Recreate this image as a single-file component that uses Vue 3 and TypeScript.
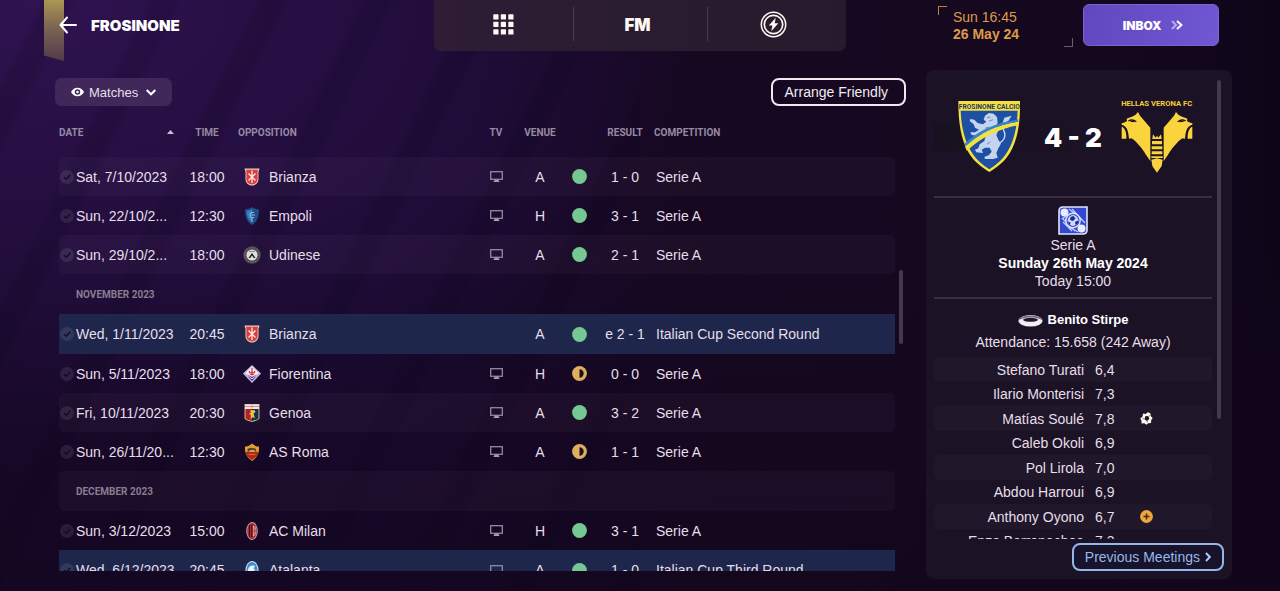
<script setup lang="ts">
import { ref } from 'vue'

type Crest = 'brianza' | 'empoli' | 'udinese' | 'fiorentina' | 'genoa' | 'roma' | 'milan' | 'atalanta'

interface Fixture {
  date: string
  time: string
  team: string
  crest: Crest
  tv: boolean
  venue: 'H' | 'A'
  outcome: 'win' | 'draw'
  result: string
  competition: string
  cup?: boolean
}

interface Row {
  month?: string
  fixture?: Fixture
  shaded?: boolean
}

interface Player {
  name: string
  rating: string
  event?: 'goal' | 'injury'
}

const view = ref('Matches')

const rows: Row[] = [
  { shaded: true, fixture: { date: 'Sat, 7/10/2023', time: '18:00', team: 'Brianza', crest: 'brianza', tv: true, venue: 'A', outcome: 'win', result: '1 - 0', competition: 'Serie A' } },
  { fixture: { date: 'Sun, 22/10/2...', time: '12:30', team: 'Empoli', crest: 'empoli', tv: true, venue: 'H', outcome: 'win', result: '3 - 1', competition: 'Serie A' } },
  { shaded: true, fixture: { date: 'Sun, 29/10/2...', time: '18:00', team: 'Udinese', crest: 'udinese', tv: true, venue: 'A', outcome: 'win', result: '2 - 1', competition: 'Serie A' } },
  { month: 'NOVEMBER 2023' },
  { fixture: { date: 'Wed, 1/11/2023', time: '20:45', team: 'Brianza', crest: 'brianza', tv: false, venue: 'A', outcome: 'win', result: 'e 2 - 1', competition: 'Italian Cup Second Round', cup: true } },
  { fixture: { date: 'Sun, 5/11/2023', time: '18:00', team: 'Fiorentina', crest: 'fiorentina', tv: true, venue: 'H', outcome: 'draw', result: '0 - 0', competition: 'Serie A' } },
  { shaded: true, fixture: { date: 'Fri, 10/11/2023', time: '20:30', team: 'Genoa', crest: 'genoa', tv: true, venue: 'A', outcome: 'win', result: '3 - 2', competition: 'Serie A' } },
  { fixture: { date: 'Sun, 26/11/20...', time: '12:30', team: 'AS Roma', crest: 'roma', tv: true, venue: 'A', outcome: 'draw', result: '1 - 1', competition: 'Serie A' } },
  { shaded: true, month: 'DECEMBER 2023' },
  { fixture: { date: 'Sun, 3/12/2023', time: '15:00', team: 'AC Milan', crest: 'milan', tv: true, venue: 'H', outcome: 'win', result: '3 - 1', competition: 'Serie A' } },
  { fixture: { date: 'Wed, 6/12/2023', time: '20:45', team: 'Atalanta', crest: 'atalanta', tv: true, venue: 'A', outcome: 'win', result: '1 - 0', competition: 'Italian Cup Third Round', cup: true } },
]

const players: Player[] = [
  { name: 'Stefano Turati', rating: '6,4' },
  { name: 'Ilario Monterisi', rating: '7,3' },
  { name: 'Matías Soulé', rating: '7,8', event: 'goal' },
  { name: 'Caleb Okoli', rating: '6,9' },
  { name: 'Pol Lirola', rating: '7,0' },
  { name: 'Abdou Harroui', rating: '6,9' },
  { name: 'Anthony Oyono', rating: '6,7', event: 'injury' },
  { name: 'Enzo Barrenechea', rating: '7,3' },
]
</script>

<template>
  <div class="screen">
    <header class="topbar">
      <div class="title">
        <span class="ribbon" aria-hidden="true"></span>
        <button class="icon-btn" type="button" aria-label="Back">
          <svg width="18" height="18" viewBox="0 0 18 18" fill="none" stroke="#fff" stroke-width="2" stroke-linecap="round" stroke-linejoin="round">
            <path d="M17 9H2M8 1.500L1.500 9L8 16.500" />
          </svg>
        </button>
        <h1>FROSINONE</h1>
      </div>

      <nav class="nav">
        <button type="button" aria-label="Menu">
          <svg width="21" height="21" viewBox="0 0 21 21" fill="#fff8f2">
            <template v-for="r in 3" :key="r">
              <rect v-for="c in 3" :key="c" :x="(c - 1) * 7.5 + 0.3" :y="(r - 1) * 7.5 + 0.3" width="5.200" height="5.200" rx="0.600" />
            </template>
          </svg>
        </button>
        <button type="button" class="fm">FM</button>
        <button type="button" aria-label="Quick actions">
          <svg width="27" height="27" viewBox="0 0 27 27" fill="none" stroke="#fff8f2">
            <circle cx="13.500" cy="13.500" r="12.200" stroke-width="1.500" />
            <circle cx="13.500" cy="13.500" r="9.200" stroke-width="1.700" />
            <path d="M15.800 6.800L8.800 14.600H12.400L11.300 20.200L18.300 12.300H14.700Z" fill="#fff8f2" stroke="none" />
          </svg>
        </button>
      </nav>

      <div class="right">
        <div class="clock">
          <time>Sun 16:45</time>
          <strong>26 May 24</strong>
        </div>
        <button type="button" class="inbox">
          INBOX
          <svg width="12" height="10" viewBox="0 0 12 10" fill="none" stroke-width="2">
            <path d="M1 1L5 5L1 9" stroke="#b9a9ee" />
            <path d="M6 1L10.400 5L6 9" stroke="#fff" />
          </svg>
        </button>
      </div>
    </header>

    <div class="content">
      <main class="main">
        <div class="toolbar">
          <label class="filter">
            <svg width="13" height="10" viewBox="0 0 13 10">
              <path d="M0 5C3 -0.700 10 -0.700 13 5C10 10.700 3 10.700 0 5Z" fill="#fff" />
              <circle cx="6.500" cy="5" r="2" fill="none" stroke="#40295c" stroke-width="1.500" />
            </svg>
            <select v-model="view" aria-label="View">
              <option>Matches</option>
            </select>
            <svg width="10" height="7" viewBox="0 0 10 7" fill="none" stroke="#fff" stroke-width="2">
              <path d="M0.700 1L5 5.300L9.300 1" />
            </svg>
          </label>
          <button type="button" class="outline">Arrange Friendly</button>
        </div>

        <div class="list">
          <table class="fixtures">
            <colgroup>
              <col class="c-date" /><col class="c-time" /><col /><col class="c-tv" /><col class="c-venue" /><col class="c-dot" /><col class="c-result" /><col />
            </colgroup>
            <thead>
              <tr>
                <th scope="col">
                  <span class="sort">DATE
                    <svg width="7" height="4" viewBox="0 0 7 4"><path d="M0 4L3.500 0L7 4Z" fill="#c9bfd2" /></svg>
                  </span>
                </th>
                <th scope="col" class="mid">TIME</th>
                <th scope="col" class="opp-head">OPPOSITION</th>
                <th scope="col" class="mid">TV</th>
                <th scope="col" class="mid">VENUE</th>
                <th scope="col" class="mid" aria-label="Outcome"></th>
                <th scope="col" class="mid result">RESULT</th>
                <th scope="col">COMPETITION</th>
              </tr>
            </thead>
            <tbody>
              <template v-for="(row, i) in rows" :key="i">
                <tr v-if="row.month" class="month" :class="{ shaded: row.shaded }">
                  <th scope="rowgroup" colspan="8">{{ row.month }}</th>
                </tr>
                <tr v-else-if="row.fixture" :class="{ shaded: row.shaded, cup: row.fixture.cup }">
                  <td>
                    <span class="date">
                      <svg width="14" height="14" viewBox="0 0 14 14">
                        <circle cx="7" cy="7" r="7" fill="#ffffff" fill-opacity="0.090" />
                        <path d="M4 7.200L6.300 9.300L10.300 4.800" fill="none" stroke="#170a26" stroke-width="1.500" />
                      </svg>
                      {{ row.fixture.date }}
                    </span>
                  </td>
                  <td class="mid">{{ row.fixture.time }}</td>
                  <td>
                    <span class="team">
                      <svg class="badge" width="18" height="18" viewBox="0 0 18 18">
                        <template v-if="row.fixture.crest === 'brianza'">
                          <path d="M1.500 0.500H16.500L15.500 4V11C15.500 15 12.500 17.500 9 17.500S2.500 15 2.500 11V4Z" fill="#f0c9c5" />
                          <path d="M3 1.700H15L14.600 4V11C14.600 14.300 12 16.400 9 16.400S3.400 14.300 3.400 11V4Z" fill="#d8403c" />
                          <path d="M9 2.500V15M5.500 5.500L12.500 12.500M12.500 5.500L5.500 12.500" stroke="#fbe9e6" stroke-width="1.300" fill="none" />
                        </template>
                        <template v-else-if="row.fixture.crest === 'empoli'">
                          <path d="M2 2.500C5 2 7 1.500 9 0C11 1.500 13 2 16 2.500C16 10 14 15 9 18C4 15 2 10 2 2.500Z" fill="#1f4f86" />
                          <path d="M3.500 4C6 3.500 7.500 3 9 2V15.500C5.500 13 3.700 9 3.500 4Z" fill="#3b7fc4" />
                          <path d="M11 5.500C7 4.500 6 10 9 10.500H11M8.500 8H12M9 11V15" stroke="#8db4dc" stroke-width="1.100" fill="none" />
                        </template>
                        <template v-else-if="row.fixture.crest === 'udinese'">
                          <circle cx="9" cy="9" r="8.800" fill="#4b4650" />
                          <circle cx="9" cy="9" r="7.300" fill="none" stroke="#857f86" stroke-width="1" stroke-dasharray="1.200 1.200" />
                          <circle cx="9" cy="9" r="5.600" fill="#dededb" />
                          <path d="M5.500 12L9 7L12.500 12L10.800 12L9 9.500L7.200 12Z" fill="#1c1a20" />
                          <path d="M6 5.500H12" stroke="#8b8b8b" />
                        </template>
                        <template v-else-if="row.fixture.crest === 'fiorentina'">
                          <path d="M9 0L18 8.500L9 18L0 8.500Z" fill="#cfc5e6" />
                          <path d="M2 8.500L9 12L16 8.500L9 16.300Z" fill="#5b2c9b" />
                          <path d="M9 2L15.500 8.300L9 11.500L2.500 8.300Z" fill="#f6f1f6" />
                          <path d="M9 3V10.500M6.500 6C5.500 8.500 8 8.500 9 6.500C10 8.500 12.500 8.500 11.500 6M7 9.500H11" stroke="#d32f3f" stroke-width="1.200" fill="none" />
                          <path d="M3 9L9 14L15 9" stroke="#e6dcf2" stroke-width="1" fill="none" />
                        </template>
                        <template v-else-if="row.fixture.crest === 'genoa'">
                          <path d="M1.500 0H16.500V14C16.500 16 12 17 9 18C6 17 1.500 16 1.500 14Z" fill="#c9b98a" />
                          <path d="M2 0.500H16V5H2Z" fill="#f0eae6" />
                          <path d="M2.500 5H9V17C6 16 2.500 15.500 2.500 14Z" fill="#b5202c" />
                          <path d="M9 5H15.500V14C15.500 15.500 12 16 9 17Z" fill="#16324a" />
                          <path d="M2 2.500H16M9 0.500V4.500" stroke="#d98a86" stroke-width="1" />
                          <path d="M7 6.500L11.500 6L12.500 8L10.500 9.500L12 14.500L10 13L7.500 15L8 11L6 10L8 8.500Z" fill="#e9c93f" />
                        </template>
                        <template v-else-if="row.fixture.crest === 'roma'">
                          <path d="M2 3.500C4.500 4 6.500 2.500 9 0.500C11.500 2.500 13.500 4 16 3.500C16.500 11 13.500 15 9 18C4.500 15 1.500 11 2 3.500Z" fill="#e0a02f" />
                          <path d="M2.300 9H15.700C14.500 12.800 12.300 15 9 17C5.700 15 3.500 12.800 2.300 9Z" fill="#b3261f" />
                          <path d="M4.500 8.500V6L7 4.800L12.500 5.500L13.500 8.500H12L11.500 7H7L6.500 8.500Z" fill="#4a423c" />
                          <path d="M5.500 11.500H12.500" stroke="#d9622f" stroke-width="1.200" />
                        </template>
                        <template v-else-if="row.fixture.crest === 'milan'">
                          <ellipse cx="9" cy="9" rx="5.800" ry="9" fill="#b9a9ac" />
                          <ellipse cx="9" cy="9" rx="4.800" ry="8" fill="#b02831" />
                          <path d="M6.500 3V15M8.800 2.500V15.500" stroke="#3a1418" stroke-width="1" />
                          <path d="M10 3.500L12.500 5V13L10 14.500Z" fill="#e8dede" />
                          <path d="M11.200 4.500V13.500M10 9H13" stroke="#b7373d" stroke-width="1.200" />
                        </template>
                        <template v-else>
                          <ellipse cx="9" cy="9" rx="6.500" ry="9" fill="#dfe9f2" />
                          <ellipse cx="9" cy="9" rx="5.500" ry="8" fill="#3f8fd0" />
                          <path d="M5 10C5 6 8 3.500 12 5L10.500 7.500L12.500 9L10 10V16H6Z" fill="#eef3f7" />
                        </template>
                      </svg>
                      {{ row.fixture.team }}
                    </span>
                  </td>
                  <td class="mid">
                    <svg v-if="row.fixture.tv" class="icon" width="13" height="11" viewBox="0 0 13 11" fill="none" stroke="#938a9f">
                      <rect x="0.700" y="0.700" width="11.600" height="7.600" stroke-width="1.300" />
                      <path d="M3.300 11L4.800 8.800H8.200L9.700 11Z" fill="#a79eb1" stroke="none" />
                    </svg>
                  </td>
                  <td class="mid">{{ row.fixture.venue }}</td>
                  <td class="mid">
                    <svg class="icon" width="15" height="15" viewBox="0 0 15 15" role="img" :aria-label="row.fixture.outcome">
                      <circle v-if="row.fixture.outcome === 'win'" cx="7.500" cy="7.500" r="7.400" fill="#76c893" />
                      <template v-else>
                        <circle cx="7.500" cy="7.500" r="7.400" fill="#deb05e" />
                        <path d="M7.500 3.300A4.200 4.200 0 0 1 7.500 11.700Z" fill="#1d0f1c" />
                      </template>
                    </svg>
                  </td>
                  <td class="mid result">{{ row.fixture.result }}</td>
                  <td class="comp">{{ row.fixture.competition }}</td>
                </tr>
              </template>
            </tbody>
          </table>
          <span class="thumb list-thumb" aria-hidden="true"></span>
        </div>
      </main>

      <aside class="panel">
        <div class="scroll">
          <section class="score">
            <svg width="64" height="73" viewBox="50 45 192 219" role="img" aria-label="Frosinone Calcio">
              <path d="M54 48H239C240 115 232 165 208 205C192 231 170 247 147 261C124 247 102 231 86 205C62 165 54 115 54 48Z" fill="#f6e13c" />
              <path d="M61 77H232C230 125 222 165 202 199C187 224 168 240 147 253C126 240 107 224 92 199C72 165 63 125 61 77Z" fill="#1d4fa3" />
              <text x="147" y="71" text-anchor="middle" class="crest-text blue">FROSINONE CALCIO</text>
              <path d="M134 92L146 84L160 86L170 96L172 112L168 124L174 136L168 150L174 164L182 176L174 190L168 204L172 218L158 222L134 222L132 216L146 210L154 200L148 188L134 188L124 194L128 204L108 202L104 194L114 190L118 178L132 168L136 154L124 146L112 152L94 150L90 142L104 142L116 134L104 128L100 118L88 108L90 102L102 104L112 114L128 118L138 110L130 104Z" fill="#c5d4ee" />
              <path d="M140 98L150 96M146 108L158 104M134 130L146 126M148 140L156 136M140 178L150 170" stroke="#6d8bc8" stroke-width="3" fill="none" />
              <path d="M172 176C194 168 198 150 190 136C184 124 186 118 192 112" stroke="#c5d4ee" stroke-width="4" fill="none" />
              <path d="M186 116L192 98L214 92L204 108Z" fill="#c5d4ee" />
              <path d="M76 184C115 150 165 122 233 112V119C165 132 118 160 80 194Z" fill="#f6e13c" stroke="#f6e13c" stroke-width="4" />
              <path d="M72 176C112 138 165 112 234 103V110C165 120 115 147 76 184Z" fill="#2f86cf" />
            </svg>
            <p class="goals">4 - 2</p>
            <svg width="74" height="74" viewBox="57 42 222 222" role="img" aria-label="Hellas Verona FC">
              <text x="167" y="62" text-anchor="middle" class="crest-text gold">HELLAS VERONA FC</text>
              <g fill="#f9d43c">
                <path d="M62 115C70 112 74 112 78 108L77 101C86 98 96 94 103 90L111 81L117 92L148 128V228L138 214C128 196 112 176 98 164L92 160L84 161C82 140 80 124 62 119Z" />
                <path d="M62 125C72 128 77 144 76 161H62Z" />
                <path d="M274 115C266 112 262 112 258 108L259 101C250 98 240 94 233 90L225 81L219 92L188 128V228L198 214C208 196 224 176 238 164L244 160L252 161C254 140 256 124 274 119Z" />
                <path d="M274 125C264 128 259 144 260 161H274Z" />
                <path d="M156 148L164 158L168 152L172 158L180 148L182 162H154Z" />
                <path d="M153 168H183V178H153ZM152 184H184V193H152ZM152 199H184V208H152ZM151 214H185V219H151Z" />
                <path d="M151 224L168 220L185 224L182 243L168 263L154 243Z" />
              </g>
              <g fill="none" stroke="#1b1226" stroke-width="4">
                <path d="M82 108C90 103 98 104 106 110M88 108L100 110" />
                <path d="M254 108C246 103 238 104 230 110M248 108L236 110" />
              </g>
            </svg>
          </section>

          <section class="match">
            <svg class="league" width="30" height="29" viewBox="0 0 30 29" role="img" aria-label="Serie A">
              <path d="M5 1H29V24Q29 28 25 28H1V5Q1 1 5 1Z" fill="#3347cf" stroke="#dfe4ff" stroke-width="1.600" />
              <circle cx="6.500" cy="6.500" r="4" fill="#e9ecff" />
              <circle cx="23.500" cy="22.500" r="4" fill="#e9ecff" />
              <path d="M11 3L24 14M8 10L4 13M4 12L17 25M11 21L20 26M14 3L27 17M5 16L14 25" stroke="#c5ceff" stroke-width="1.200" />
              <circle cx="15" cy="14.500" r="7.200" fill="#3347cf" stroke="#dfe4ff" stroke-width="1.400" />
              <circle cx="15" cy="14.500" r="5.400" fill="#cfd7ff" />
              <path d="M12.500 11L15.500 10L17.500 12.500L15 15L12 14ZM10 15.500L12.500 16.500L12 19L10.500 18ZM17 16L20 14.500V17.500L17.500 19Z" fill="#1b2b8e" />
            </svg>
            <p>Serie A</p>
            <p class="bold">Sunday 26th May 2024</p>
            <p>Today 15:00</p>
          </section>

          <section class="venue">
            <p class="stadium">
              <svg width="25" height="13" viewBox="0 0 25 13">
                <ellipse cx="12.500" cy="6.800" rx="12" ry="5.800" fill="#f1eff4" />
                <path d="M0.500 6C2 0 23 0 24.500 6L20 4.500C16 3 9 3 5 4.500Z" fill="#77717f" />
                <ellipse cx="12.500" cy="5.800" rx="7.500" ry="2" fill="#221a2c" />
              </svg>
              Benito Stirpe
            </p>
            <p>Attendance: 15.658 (242 Away)</p>
          </section>

          <table class="players">
            <colgroup>
              <col /><col class="p-rating" /><col class="p-event" /><col class="p-rest" />
            </colgroup>
            <tbody>
              <tr v-for="p in players" :key="p.name">
                <th scope="row">{{ p.name }}</th>
                <td class="rating">{{ p.rating }}</td>
                <td class="mid">
                  <svg v-if="p.event === 'goal'" class="icon" width="13" height="13" viewBox="0 0 13 13" role="img" aria-label="Goal">
                    <path d="M3 1.500L5.500 2L8 0.300L10.500 1.500L10.800 4.300L12.700 6L11.300 8L11 11L8.300 11.300L6.500 12.800L4.300 11.300L1.500 11.500L1.500 8.800L0.300 6.500L2.600 4.500Z" fill="#fffaf2" />
                    <path d="M5.500 4L8.500 4.200L9.300 7L7 8.900L4.500 7.200Z" fill="#1d1228" />
                    <path d="M2.500 6.500L4.500 7M7 8.900L7.300 10.500M9 4.200L10.500 3" stroke="#1d1228" stroke-width="0.600" />
                  </svg>
                  <svg v-else-if="p.event === 'injury'" class="icon" width="13" height="13" viewBox="0 0 13 13" role="img" aria-label="Injury">
                    <circle cx="6.500" cy="6.500" r="6.400" fill="#eda73c" />
                    <path d="M6.500 3.500V9.500M3.500 6.500H9.500" stroke="#3d2a1c" stroke-width="1.500" />
                  </svg>
                </td>
                <td></td>
              </tr>
            </tbody>
          </table>
        </div>
        <span class="thumb panel-thumb" aria-hidden="true"></span>
        <button type="button" class="outline previous">
          Previous Meetings
          <svg width="6" height="10" viewBox="0 0 6 10" fill="none" stroke="#a9cdf5" stroke-width="2">
            <path d="M1 1L4.800 5L1 9" />
          </svg>
        </button>
      </aside>
    </div>
  </div>
</template>

<style>
body {
  margin: 0;
  background: #14071f;
}
</style>

<style scoped>
* {
  box-sizing: border-box;
}

.screen {
  display: flex;
  flex-direction: column;
  height: 100vh;
  overflow: hidden;
  font-family: "Liberation Sans", Arial, sans-serif;
  font-size: 14px;
  color: #e6dfe9;
  background:
    repeating-linear-gradient(116deg, rgba(10, 2, 24, 0) 0 36px, rgba(10, 2, 24, 0.16) 44px 62px, rgba(10, 2, 24, 0) 70px 96px) 0 0 / 50% 100% no-repeat,
    radial-gradient(ellipse 660px 440px at 3% 0%, #2f1350 0%, rgba(43, 17, 74, 0.7) 40%, rgba(30, 11, 52, 0) 100%),
    linear-gradient(180deg, rgba(18, 6, 28, 0) 40%, rgba(18, 6, 28, 0.7) 100%),
    linear-gradient(90deg, #1a0a2e 0%, #1b0a32 30%, #160820 56%, #14081f 85%, #0f0519 100%);
}

h1,
p {
  margin: 0;
}

button,
select {
  font: inherit;
  color: inherit;
  border: 0;
  background: none;
  padding: 0;
  cursor: pointer;
}

svg {
  flex: none;
}

.topbar {
  display: grid;
  grid-template-columns: 1fr 412px 1fr;
  align-items: start;
  flex: none;
  height: 70px;
}

.title {
  position: relative;
  display: flex;
  align-items: center;
  gap: 14px;
  height: 50px;
  padding-left: 59px;
}

.ribbon {
  position: absolute;
  top: 0;
  left: 44px;
  width: 20px;
  height: 61px;
  background: linear-gradient(#ac9652, #7b6552 45%, #52394b);
  clip-path: polygon(0 0, 100% 0, 100% 100%, 0 91%);
}

.icon-btn {
  position: relative;
  display: flex;
}

h1 {
  font-family: Inter, sans-serif;
  font-size: 15px;
  font-weight: 900;
  color: #fff;
}

.nav {
  display: grid;
  grid-template-columns: 139px 1fr 131px;
  height: 51px;
  padding: 7px 8px 10px 0;
  border-radius: 0 0 7px 7px;
  background: linear-gradient(90deg, #2e1d35, #261b2c);
}

.nav button {
  display: flex;
  align-items: center;
  justify-content: center;
}

.nav button + button {
  border-left: 1px solid #4a3d50;
}

.nav .fm {
  padding: 2px 6px 0 0;
  font-family: Inter, sans-serif;
  font-size: 17px;
  font-weight: 900;
  color: #fff8f2;
}

.right {
  display: flex;
  justify-content: flex-end;
  gap: 10px;
  padding: 4px 61px 0 0;
}

.clock {
  display: flex;
  flex-direction: column;
  width: 135px;
  height: 41px;
  margin-top: 2px;
  padding: 3px 0 0 15px;
  line-height: 17px;
  color: #dd9a48;
  background:
    linear-gradient(#b98042, #b98042) 0 0 / 9px 1px no-repeat,
    linear-gradient(#b98042, #b98042) 0 0 / 1px 9px no-repeat,
    linear-gradient(#6a5d70, #6a5d70) 100% 100% / 9px 1px no-repeat,
    linear-gradient(#6a5d70, #6a5d70) 100% 100% / 1px 9px no-repeat;
}

.inbox {
  display: flex;
  align-items: center;
  justify-content: center;
  gap: 10px;
  width: 136px;
  height: 42px;
  padding-left: 4px;
  border: 1px solid #7a63d2;
  border-radius: 6px;
  background: linear-gradient(100deg, #6247c0, #6f58d2);
  font-family: Inter, sans-serif;
  font-size: 12px;
  font-weight: 900;
  color: #fff;
}

.content {
  display: flex;
  flex: 1;
  gap: 19px;
  min-height: 0;
  padding: 0 48px 12px 55px;
}

.main {
  display: flex;
  flex: 1;
  flex-direction: column;
  min-width: 0;
  padding: 8px 0;
}

.toolbar {
  display: flex;
  flex: none;
  align-items: center;
  justify-content: space-between;
  padding-right: 1px;
}

.filter {
  display: flex;
  align-items: center;
  gap: 5px;
  height: 28px;
  padding: 0 16px;
  border-radius: 7px;
  background: #40295a;
}

.filter select {
  appearance: none;
  margin-right: 2px;
  font-size: 13px;
  outline: 0;
}

.outline {
  display: flex;
  align-items: center;
  height: 28px;
  padding: 0 16px 0 12px;
  border: 2px solid #efe9f1;
  border-radius: 8px;
  color: #f1ebf2;
}

.list {
  position: relative;
  flex: 1;
  min-height: 0;
  overflow: hidden;
  padding: 0 12px 0 4px;
}

table {
  width: 100%;
  table-layout: fixed;
  border-collapse: separate;
  border-spacing: 0;
}

th,
td {
  padding: 0;
  text-align: left;
  white-space: nowrap;
}

.mid {
  text-align: center;
}

.c-date { width: 120px; }
.c-time { width: 56px; }
.c-tv { width: 40px; }
.c-venue { width: 48px; }
.c-dot { width: 30px; }
.c-result { width: 60px; }

.fixtures thead th {
  height: 51px;
  padding-top: 1px;
  font-family: Roboto, sans-serif;
  font-size: 10px;
  font-weight: 700;
  color: #978aa4;
}

.sort {
  display: flex;
  align-items: center;
  justify-content: space-between;
  padding-right: 5px;
}

.fixtures .opp-head {
  padding-left: 3px;
}

.fixtures .result {
  padding-left: 2px;
}

.fixtures tbody td {
  height: 39px;
}

.fixtures .month th {
  height: 40px;
  padding: 1px 0 0 17px;
  font-family: Roboto, sans-serif;
  font-size: 10px;
  font-weight: 700;
  color: #897d90;
}

.fixtures .cup td {
  height: 40px;
  background: #1e264c;
}

.shaded td,
.shaded th {
  background: rgba(255, 235, 250, 0.03);
}

.shaded > :first-child {
  border-radius: 5px 0 0 5px;
}

.shaded > :last-child {
  border-radius: 0 5px 5px 0;
}

.shaded > :only-child {
  border-radius: 5px;
}

.date {
  display: flex;
  align-items: center;
  gap: 2px;
  padding-left: 1px;
}

.team {
  display: flex;
  align-items: center;
  gap: 8px;
  padding-left: 8px;
}

.fixtures .comp {
  padding-left: 2px;
}

.icon {
  display: block;
  margin: 0 auto;
}

.thumb {
  position: absolute;
  width: 4px;
  border-radius: 2px;
  background: #45384b;
}

.list-thumb {
  top: 164px;
  right: 4px;
  height: 74px;
}

.panel-thumb {
  top: 10px;
  right: 11px;
  height: 339px;
}

.panel {
  position: relative;
  display: flex;
  flex-direction: column;
  flex: none;
  width: 306px;
  padding: 0 8px 8px;
  border-radius: 8px;
  background: #1c1226;
}

.scroll {
  flex: 1;
  min-height: 0;
  margin-right: 12px;
  margin-bottom: 4px;
  overflow: hidden;
}

.score {
  display: grid;
  grid-template-columns: repeat(3, 84px);
  align-items: center;
  justify-content: center;
  justify-items: center;
  height: 128px;
  padding-top: 6px;
  border-bottom: 2px solid #392e44;
  background: linear-gradient(90deg, #18111f, #1c1226 70%) 0 52px / 100% 29px no-repeat;
}

.goals {
  padding-top: 3px;
  font-family: Inter, sans-serif;
  font-size: 26px;
  font-weight: 900;
  color: #fff;
}

.crest-text {
  font-family: Roboto, sans-serif;
  font-weight: 700;
}

.blue {
  fill: #1c3a6a;
  font-size: 20px;
}

.gold {
  fill: #f3cf3c;
  font-size: 23px;
}

.match {
  display: flex;
  flex-direction: column;
  align-items: center;
  height: 101px;
  padding-top: 8px;
  border-bottom: 2px solid #392e44;
  line-height: 18px;
}

.league {
  margin-bottom: 1px;
}

.bold {
  font-weight: 700;
  color: #fff;
}

.venue {
  display: flex;
  flex-direction: column;
  align-items: center;
  height: 58px;
  padding-top: 10px;
  line-height: 22px;
}

.stadium {
  display: flex;
  align-items: center;
  gap: 5px;
  font-size: 13px;
  font-weight: 700;
  color: #fff;
}

.p-rating { width: 44px; }
.p-event { width: 36px; }
.p-rest { width: 48px; }

.players th,
.players td {
  height: 24px;
  font-weight: 400;
}

.players th {
  text-align: right;
}

.players .rating {
  padding-left: 11px;
}

.players tr:nth-child(odd) > * {
  height: 25px;
  background: #20172a;
}

.players tr > :first-child {
  border-radius: 5px 0 0 5px;
}

.players tr > :last-child {
  border-radius: 0 5px 5px 0;
}

.previous {
  align-self: flex-end;
  gap: 5px;
  padding: 0 11px;
  border-color: #94b9e8;
  background: #19122b;
  color: #94b9e8;
}
</style>
